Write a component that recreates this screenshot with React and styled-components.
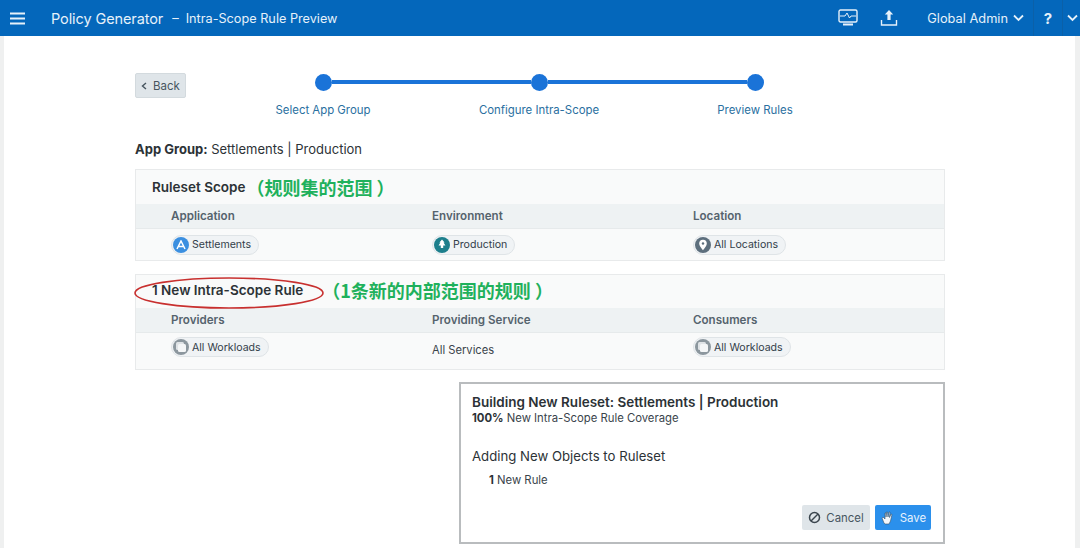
import React from 'react';
import styled, { createGlobalStyle } from 'styled-components';

const Global = createGlobalStyle`
  html, body { margin: 0; padding: 0; background: #fff; }
  body { font-family: Inter, "Noto Sans CJK SC", sans-serif; color: #2c3236; }
  * { box-sizing: border-box; }
`;

const Page = styled.div`
  width: 1080px;
  height: 548px;
  overflow: hidden;
  display: flex;
  flex-direction: column;
`;

// header
const Header = styled.header`
  height: 36px;
  flex: none;
  background: #0467bb;
  color: #e6f1fa;
  display: flex;
  align-items: center;
  padding-left: 10px;
`;
const Title = styled.span`
  font-size: 14.5px;
  margin-left: 26px;
  letter-spacing: -0.1px;
`;
const Dash = styled.span`
  font-size: 13px;
  margin-left: 9px;
`;
const SubTitle = styled.span`
  font-size: 12.7px;
  margin-left: 7px;
`;
const HeaderRight = styled.div`
  margin-left: auto;
  display: flex;
  align-items: center;
  height: 100%;
`;
const HeaderIcon = styled.svg`
  display: block;
  margin-right: ${p => p.$gap}px;
`;
const AdminLabel = styled.span`
  font-size: 12.8px;
  margin-right: 5px;
`;
const HelpCell = styled.div`
  height: 100%;
  width: 30px;
  margin-left: 9px;
  border-left: 1px solid #0b60a8;
  border-right: 1px solid #0b60a8;
  font-size: 15px;
  font-weight: 700;
  display: flex;
  align-items: center;
  justify-content: center;
`;
const CaretCell = styled.div`
  padding-left: 4px;
  width: 17px;
  display: flex;
`;

// body
const Body = styled.main`
  flex: 1;
  padding: 37px 130px 0 131px;
  border-left: 4px solid #eff0f0;
  border-right: 5px solid #eff0f0;
`;
const TopRow = styled.div`
  display: flex;
  align-items: flex-start;
  height: 68px;
`;
const BackButton = styled.button`
  width: 51px;
  height: 25px;
  background: #dfe5e9;
  border: 1px solid #d3dade;
  border-radius: 2px;
  font: 11.5px Inter, sans-serif;
  color: #47555f;
  display: flex;
  align-items: center;
  justify-content: center;
  gap: 6px;
  padding: 0;
`;
const Stepper = styled.div`
  margin-left: 29px;
  width: 648px;
`;
const Track = styled.div`
  display: flex;
  align-items: center;
  padding: 0 99px 0 100px;
  height: 18px;
`;
const Dot = styled.span`
  width: 17px;
  height: 17px;
  border-radius: 50%;
  background: #1a73d8;
  flex: none;
`;
const Line = styled.span`
  flex: 1;
  height: 4px;
  background: #1a73d8;
`;
const StepLabels = styled.div`
  display: grid;
  grid-template-columns: repeat(3, 216px);
  margin-top: 12px;
`;
const StepLabel = styled.span`
  text-align: center;
  font-size: 11.4px;
  color: #2a6f9f;
`;

const AppGroup = styled.div`
  font-size: 13px;
  line-height: 16px;
  margin-bottom: 12px;
  b { font-weight: 700; }
`;

const Section = styled.section`
  border: 1px solid #e8eaeb;
  background: #f9fafa;
  margin-bottom: ${p => p.$gap}px;
  position: relative;
`;
const SectionTitle = styled.div`
  height: ${p => p.$h}px;
  padding: 0 0 ${p => p.$lift}px 16px;
  display: flex;
  align-items: center;
  font-size: 13.5px;
  font-weight: 600;
  gap: ${p => p.$gap}px;
`;
const Note = styled.span`
  color: #1fb15c;
  font-size: 18px;
  font-weight: 700;
  font-family: "Noto Sans CJK SC", sans-serif;
`;
const Grid = styled.div`
  display: grid;
  grid-template-columns: repeat(3, 261px);
  padding-left: 35px;
  height: ${p => p.$h}px;
  align-items: center;
  background: ${p => p.$head ? '#eef2f3' : 'transparent'};
  border-bottom: ${p => p.$head ? '1px solid #e6eaeb' : 'none'};
`;
const ColHead = styled.span`
  font-size: 11.6px;
  font-weight: 600;
  color: #55636d;
`;
const Pill = styled.span`
  display: inline-flex;
  align-items: center;
  justify-self: start;
  height: 20px;
  padding: 0 7px 0 1px;
  gap: 3px;
  border: 1px solid #dfe4e7;
  border-radius: 10px;
  background: #f0f3f5;
  font-size: 10.6px;
  color: #33404a;
  margin-top: ${p => p.$up ? -8 : 0}px;
`;
const Badge = styled.span`
  width: 16px;
  height: 16px;
  border-radius: 50%;
  background: ${p => p.$bg};
  display: flex;
  align-items: center;
  justify-content: center;
  flex: none;
`;
const PlainCell = styled.span`
  font-size: 11.2px;
  color: #3a444b;
  margin-top: -2px;
`;

const Ring = styled.svg`
  position: absolute;
  left: -2px;
  top: 1px;
`;

// summary box
const SummaryRow = styled.div`
  display: flex;
  justify-content: flex-end;
`;
const Summary = styled.div`
  width: 486px;
  height: 162px;
  border: 2px solid #b9bcbe;
  background: #fff;
  padding: 10px 12px 0 11px;
  display: flex;
  flex-direction: column;
`;
const SummaryTitle = styled.div`
  font-size: 13.5px;
  font-weight: 600;
  line-height: 16px;
`;
const SummaryLine = styled.div`
  font-size: 11.3px;
  line-height: 15px;
  margin-top: 1px;
  color: #3a444b;
  b { color: #2c3236; }
`;
const SummaryHeading = styled.div`
  font-size: 13.2px;
  line-height: 16px;
  margin-top: 22px;
`;
const RuleLine = styled.div`
  font-size: 11.3px;
  line-height: 14px;
  margin: 9px 0 0 17px;
  color: #3a444b;
  b { color: #2c3236; }
`;
const Actions = styled.div`
  display: flex;
  justify-content: flex-end;
  gap: 5px;
  margin-top: 18px;
`;
const ActionButton = styled.button`
  height: 25px;
  width: ${p => p.$w}px;
  border: none;
  border-radius: 2px;
  padding: 0;
  font: 11.4px Inter, sans-serif;
  display: flex;
  align-items: center;
  justify-content: center;
  gap: 5px;
  background: ${p => p.$primary ? '#2b90ec' : '#dfe5e9'};
  color: ${p => p.$primary ? '#e6f2fd' : '#47555f'};
`;

const Caret = ({ color = '#e6f1fa' }) => (
  <svg width="11" height="8" viewBox="0 0 11 8">
    <path d="M1 1.5 5.5 6 10 1.5" fill="none" stroke={color} strokeWidth="1.8" />
  </svg>
);

const WorkloadIcon = () => (
  <Badge $bg="#8c979e">
    <svg width="12" height="12" viewBox="0 0 12 12">
      <rect x="1" y="1" width="8" height="8" rx="1.5" fill="#dfe3e6" />
      <rect x="3" y="3" width="8" height="8" rx="1.5" fill="#f4f6f7" />
    </svg>
  </Badge>
);

const App = () => (
  <Page>
    <Global />
    <Header>
      <svg width="15" height="13" viewBox="0 0 15 13">
        <path d="M0 1.5h15M0 6.5h15M0 11.5h15" stroke="#e6f1fa" strokeWidth="2.2" />
      </svg>
      <Title>Policy Generator</Title>
      <Dash>–</Dash>
      <SubTitle>Intra-Scope Rule Preview</SubTitle>
      <HeaderRight>
        <HeaderIcon $gap={22} width="20" height="18" viewBox="0 0 20 18" fill="none" stroke="#e6f1fa">
          <rect x="1" y="1" width="18" height="12" rx="1.5" strokeWidth="1.4" />
          <path d="M2 7h5l2-3 2.5 5 1.5-2h5" strokeWidth="1" />
          <path d="M5 15.5h10" strokeWidth="2" />
        </HeaderIcon>
        <HeaderIcon $gap={29} width="18" height="18" viewBox="0 0 18 18" fill="none" stroke="#e6f1fa">
          <path d="M9 1 4.8 5.5h2.6V11h3.2V5.5h2.6z" fill="#e6f1fa" stroke="none" />
          <path d="M1.5 11v5h15v-5" strokeWidth="1.4" />
        </HeaderIcon>
        <AdminLabel>Global Admin</AdminLabel>
        <Caret />
        <HelpCell>?</HelpCell>
        <CaretCell><Caret /></CaretCell>
      </HeaderRight>
    </Header>

    <Body>
      <TopRow>
        <BackButton>
          <svg width="6" height="8" viewBox="0 0 6 8">
            <path d="M5 1 1.5 4 5 7" fill="none" stroke="#47555f" strokeWidth="1.4" />
          </svg>
          Back
        </BackButton>
        <Stepper>
          <Track>
            <Dot /><Line /><Dot /><Line /><Dot />
          </Track>
          <StepLabels>
            <StepLabel>Select App Group</StepLabel>
            <StepLabel>Configure Intra-Scope</StepLabel>
            <StepLabel>Preview Rules</StepLabel>
          </StepLabels>
        </Stepper>
      </TopRow>

      <AppGroup><b>App Group:</b> Settlements | Production</AppGroup>

      <Section $gap={13}>
        <SectionTitle $h={34} $lift={1} $gap={1}>
          Ruleset Scope <Note>（规则集的范围 ）</Note>
        </SectionTitle>
        <Grid $head $h={25}>
          <ColHead>Application</ColHead>
          <ColHead>Environment</ColHead>
          <ColHead>Location</ColHead>
        </Grid>
        <Grid $h={31}>
          <Pill>
            <Badge $bg="#3b8fe0">
              <svg width="10" height="10" viewBox="0 0 10 10">
                <path d="M1 9 5 1l4 8M2.8 6.5h4.4" fill="none" stroke="#fff" strokeWidth="1.5" />
              </svg>
            </Badge>
            Settlements
          </Pill>
          <Pill>
            <Badge $bg="#1d7f8c">
              <svg width="10" height="11" viewBox="0 0 10 11">
                <path d="M5 .5 7.6 3.6H6.6L8.4 6.6H6.2V9H3.8V6.6H1.6L3.4 3.6H2.4z" fill="#fff" />
              </svg>
            </Badge>
            Production
          </Pill>
          <Pill>
            <Badge $bg="#5d6f7d">
              <svg width="10" height="12" viewBox="0 0 10 12">
                <path d="M5 .8a3.8 3.8 0 0 1 3.8 3.8C8.8 7.2 5 11.2 5 11.2S1.2 7.2 1.2 4.6A3.8 3.8 0 0 1 5 .8z" fill="#fff" />
                <circle cx="5" cy="4.5" r="1.2" fill="#5d6f7d" />
              </svg>
            </Badge>
            All Locations
          </Pill>
        </Grid>
      </Section>

      <Section $gap={12}>
        <SectionTitle $h={33} $lift={3} $gap={19}>
          1 New Intra-Scope Rule <Note>（1条新的内部范围的规则 ）</Note>
        </SectionTitle>
        <Grid $head $h={25}>
          <ColHead>Providers</ColHead>
          <ColHead>Providing Service</ColHead>
          <ColHead>Consumers</ColHead>
        </Grid>
        <Grid $h={36}>
          <Pill $up><WorkloadIcon />All Workloads</Pill>
          <PlainCell>All Services</PlainCell>
          <Pill $up><WorkloadIcon />All Workloads</Pill>
        </Grid>
        <Ring width="192" height="34" viewBox="0 0 192 34">
          <ellipse cx="95" cy="17" rx="94" ry="15" fill="none" stroke="#c8302f" strokeWidth="1.6" />
        </Ring>
      </Section>

      <SummaryRow>
        <Summary>
          <SummaryTitle>Building New Ruleset: Settlements | Production</SummaryTitle>
          <SummaryLine><b>100%</b> New Intra-Scope Rule Coverage</SummaryLine>
          <SummaryHeading>Adding New Objects to Ruleset</SummaryHeading>
          <RuleLine><b>1</b> New Rule</RuleLine>
          <Actions>
            <ActionButton $w={68}>
              <svg width="13" height="13" viewBox="0 0 13 13" fill="none" stroke="#3b464e" strokeWidth="1.5">
                <circle cx="6.5" cy="6.5" r="5" />
                <path d="M3 10 10 3" />
              </svg>
              Cancel
            </ActionButton>
            <ActionButton $primary $w={56}>
              <svg width="15" height="15" viewBox="0 0 15 15">
                <path d="M4 13 2 8l1-1 2 2V3h1v4l.5-5h1L8 7l1-5h1L9.5 7.5 11 4l1 .5L10.5 11 9 14H5z" fill="#f3f7fb" stroke="#35506a" strokeWidth=".6" />
              </svg>
              Save
            </ActionButton>
          </Actions>
        </Summary>
      </SummaryRow>
    </Body>
  </Page>
);

export default App;
